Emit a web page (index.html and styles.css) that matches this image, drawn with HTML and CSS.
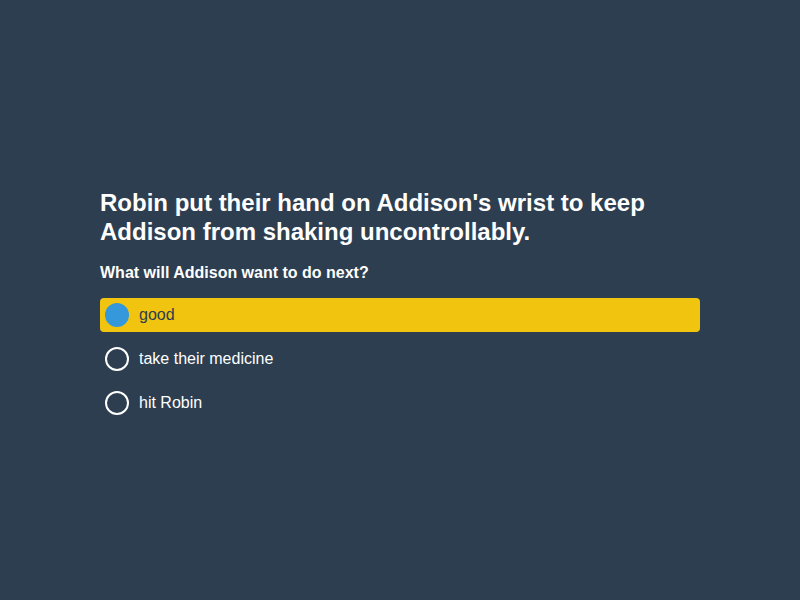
FILE: index.html
```html
<!DOCTYPE html>
<html>
<head>
<meta charset="utf-8">
<link rel="stylesheet" href="styles.css">
</head>
<body>
<main class="quiz">
  <h1 class="context">Robin put their hand on Addison's wrist to keep Addison from shaking uncontrollably.</h1>
  <p class="question">What will Addison want to do next?</p>
  <ul class="options">
    <li class="option selected"><span class="radio"></span><span class="label">good</span></li>
    <li class="option"><span class="radio"></span><span class="label">take their medicine</span></li>
    <li class="option"><span class="radio"></span><span class="label">hit Robin</span></li>
  </ul>
</main>
</body>
</html>
```
FILE: styles.css
```css
html, body {
  margin: 0;
  padding: 0;
  height: 100%;
}
body {
  background: #2c3e50;
  color: #ffffff;
  font-family: "Liberation Sans", Arial, sans-serif;
}
.quiz {
  width: 600px;
  margin: 0 auto;
  padding-top: 188px;
}
.context {
  margin: 0;
  font-size: 24px;
  line-height: 29px;
  font-weight: bold;
}
.question {
  margin: 17px 0 0;
  font-size: 16px;
  line-height: 20px;
  font-weight: bold;
}
.options {
  list-style: none;
  margin: 15px 0 0;
  padding: 0;
  display: flex;
  flex-direction: column;
  gap: 10px;
}
.option {
  display: flex;
  align-items: center;
  height: 34px;
  padding: 0 5px;
  border-radius: 4px;
  font-size: 16px;
}
.option.selected {
  background: #f1c40f;
  color: #2c3e50;
}
.radio {
  width: 20px;
  height: 20px;
  border: 2px solid #ffffff;
  border-radius: 50%;
  margin-right: 10px;
  flex: none;
}
.option.selected .radio {
  background: #3498db;
  border-color: #3498db;
}
```
